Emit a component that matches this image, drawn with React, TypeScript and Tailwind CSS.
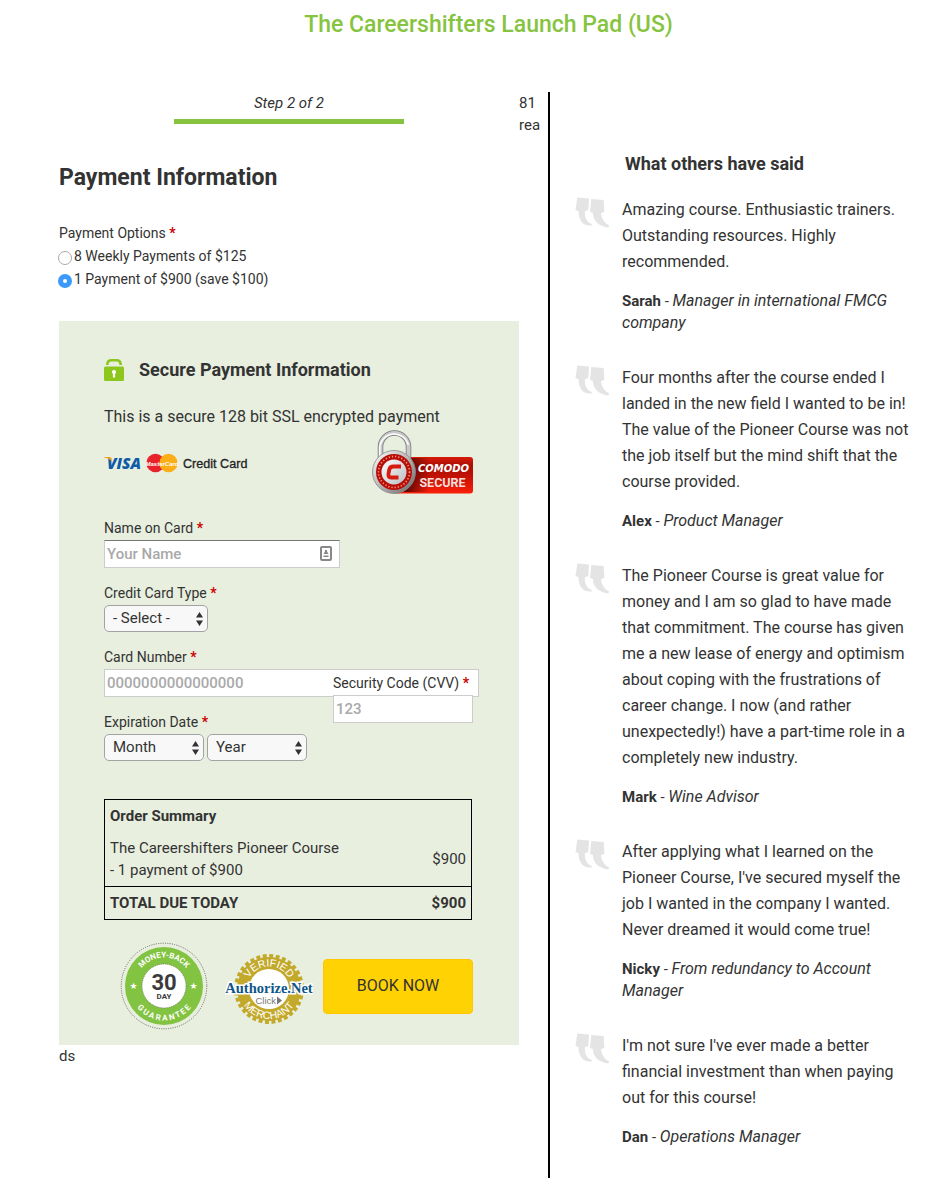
import React from "react";

const quotes = [
  { text: "Amazing course. Enthusiastic trainers. Outstanding resources. Highly recommended.", name: "Sarah", role: "Manager in international FMCG company" },
  { text: "Four months after the course ended I landed in the new field I wanted to be in! The value of the Pioneer Course was not the job itself but the mind shift that the course provided.", name: "Alex", role: "Product Manager" },
  { text: "The Pioneer Course is great value for money and I am so glad to have made that commitment. The course has given me a new lease of energy and optimism about coping with the frustrations of career change. I now (and rather unexpectedly!) have a part-time role in a completely new industry.", name: "Mark", role: "Wine Advisor" },
  { text: "After applying what I learned on the Pioneer Course, I've secured myself the job I wanted in the company I wanted. Never dreamed it would come true!", name: "Nicky", role: "From redundancy to Account Manager" },
  { text: "I'm not sure I've ever made a better financial investment than when paying out for this course!", name: "Dan", role: "Operations Manager" },
];

function Star() {
  return <span className="font-bold text-[#c00]">*</span>;
}

function QuoteMark() {
  return (
    <svg width="34" height="32" viewBox="0 0 34 32" fill="#e4e4e4" className="shrink-0" aria-hidden="true">
      <path d="M2.300 .5 14 1.500 13.300 13.200 10 14C9.300 19.500 11.500 25.500 17 27.200L16.500 28.500C8 29.500 3.300 23 3.500 14L.5 13Z" />
      <path d="M16.300 2 28.700 3 29.300 15 26 16C26.500 21 28.500 25.500 34 28.300L33.500 30.500C24 29.500 17.500 23.500 18 16L15 15Z" />
    </svg>
  );
}

function LockIcon() {
  return (
    <svg width="20" height="22" viewBox="0 0 20 22" aria-hidden="true">
      <path d="M3.300 6C3.300 2.500 5 1.200 7.500 1.200h5C15 1.200 16.700 2.500 16.700 6" fill="none" stroke="#8dc71e" strokeWidth="2.600" />
      <rect y="7.500" width="20" height="14.500" rx="1.500" fill="#8dc71e" />
      <path d="M10 11a2 2 0 0 1 1.100 3.700V18.500H8.900V14.700A2 2 0 0 1 10 11Z" fill="#fff" />
    </svg>
  );
}

function CardLogos() {
  return (
    <svg width="148" height="20" viewBox="0 0 148 20" role="img" aria-label="Visa, MasterCard, Credit Card">
      <text x="3" y="15.500" fontFamily="Open Sans" fontWeight="800" fontStyle="italic" fontSize="15.500" fill="#0f5ba7">VISA</text>
      <path d="M0 4h5.500c1 0 1.500.5 1.700 1.400L8 9C6 6 3.500 5 0 4.500Z" fill="#f4a11d" />
      <circle cx="51.500" cy="10" r="9.200" fill="#e8222b" />
      <circle cx="64.500" cy="10" r="9.200" fill="#fbae17" />
      <text x="58" y="12.500" textAnchor="middle" fontFamily="Liberation Sans" fontWeight="700" fontStyle="italic" fontSize="6" fill="#fff">MasterCard</text>
      <text x="79" y="14.500" fontFamily="Liberation Sans" fontSize="12.600" fill="#222" stroke="#222" strokeWidth=".3">Credit Card</text>
    </svg>
  );
}

function ComodoSeal() {
  return (
    <svg width="102" height="65" viewBox="0 0 102 65" role="img" aria-label="Comodo Secure">
      <defs>
        <linearGradient id="red" x1="0" y1="0" x2="0" y2="1">
          <stop offset="0" stopColor="#d81a08" /><stop offset=".25" stopColor="#a80f05" /><stop offset=".55" stopColor="#c41205" /><stop offset="1" stopColor="#fb1f08" />
        </linearGradient>
        <linearGradient id="shade"><stop offset="0" stopColor="#300" stopOpacity=".85" /><stop offset="1" stopColor="#300" stopOpacity="0" /></linearGradient>
        <linearGradient id="steel" x1="0" y1="0" x2="1" y2="1">
          <stop offset="0" stopColor="#fff" /><stop offset=".5" stopColor="#b5b5b5" /><stop offset="1" stopColor="#666" />
        </linearGradient>
        <linearGradient id="disc" x1="0" y1="0" x2="1" y2="1"><stop offset="0" stopColor="#fff" /><stop offset="1" stopColor="#b8bcc2" /></linearGradient>
      </defs>
      <rect x="22" y="27" width="79" height="36.500" rx="3" fill="url(#red)" />
      <rect x="32" y="28" width="25" height="34" fill="url(#shade)" />
      <path d="M8.500 34V17a14 14 0 0 1 28 0V34" fill="none" stroke="#777" strokeWidth="5.500" />
      <path d="M8.500 34V17a14 14 0 0 1 28 0V34" fill="none" stroke="#c9c9c9" strokeWidth="4" />
      <path d="M7.800 34V17a14.500 14.500 0 0 1 28.500 -2" fill="none" stroke="#fff" strokeWidth="1.500" />
      <circle cx="22" cy="42" r="21.500" fill="url(#steel)" stroke="#888" strokeWidth=".8" />
      <circle cx="22" cy="42" r="18" fill="#b70f08" />
      <circle cx="22" cy="42" r="15.500" fill="none" stroke="#ff9a85" strokeWidth="1.600" strokeDasharray="1.200 2" />
      <circle cx="22" cy="42" r="12.500" fill="url(#disc)" />
      <path d="M29 36.500H21.500Q18 36.500 17.300 39.500L16.500 44Q16 47.500 19 47.500H26.500" fill="none" stroke="#d91a10" strokeWidth="3.800" />
      <text x="71.500" y="42" textAnchor="middle" fontFamily="DejaVu Sans" fontWeight="700" fontStyle="italic" fontSize="10" fill="#fff">COMODO</text>
      <text x="70.500" y="56.500" textAnchor="middle" fontFamily="Roboto" fontWeight="700" fontSize="12.500" fill="#f6dedb">SECURE</text>
    </svg>
  );
}

function GuaranteeSeal() {
  return (
    <svg width="88" height="88" viewBox="0 0 88 88" role="img" aria-label="30 day money-back guarantee">
      <defs>
        <path id="gTop" d="M15.500 44a28.500 28.500 0 0 1 57 0" />
        <path id="gBottom" d="M9.500 44a34.500 34.500 0 0 0 69 0" />
      </defs>
      <circle cx="44" cy="44" r="42.800" fill="none" stroke="#666" strokeWidth="1" strokeDasharray="1 1.300" />
      <circle cx="44" cy="44" r="39" fill="#82c341" />
      <circle cx="44" cy="44" r="22" fill="#fff" stroke="#777" strokeWidth=".8" strokeDasharray="1 1" />
      <g fontFamily="Roboto" fontWeight="700" fontSize="8" fill="#fff" textAnchor="middle">
        <text><textPath href="#gTop" startOffset="50%">MONEY-BACK</textPath></text>
        <text><textPath href="#gBottom" startOffset="50%">G U A R A N T E E</textPath></text>
        <text x="13.500" y="47" fontFamily="DejaVu Sans" fontSize="9">★</text>
        <text x="73.500" y="47" fontFamily="DejaVu Sans" fontSize="9">★</text>
      </g>
      <g fontFamily="Roboto" fontWeight="700" fill="#3b3b3d" textAnchor="middle">
        <text x="44" y="48" fontSize="22">30</text>
        <text x="44" y="57" fontSize="8">DAY</text>
      </g>
    </svg>
  );
}

function AuthorizeSeal() {
  return (
    <svg width="88" height="70" viewBox="0 0 88 70" role="img" aria-label="Authorize.Net verified merchant">
      <defs>
        <path id="aTop" d="M21.500 35a22.500 22.500 0 0 1 45 0" />
        <path id="aBottom" d="M14 35a30 30 0 0 0 60 0" />
      </defs>
      <circle cx="44" cy="35" r="33" fill="none" stroke="#c3a92b" strokeWidth="4" strokeDasharray="3.900 2.580" />
      <circle cx="44" cy="35" r="32" fill="#c3a92b" />
      <circle cx="44" cy="35" r="20" fill="#fff" />
      <g fontFamily="Liberation Sans" fontSize="10.500" fill="#fff" textAnchor="middle">
        <text><textPath href="#aTop" startOffset="50%">VERIFIED</textPath></text>
        <text><textPath href="#aBottom" startOffset="50%">MERCHANT</textPath></text>
      </g>
      <text x="44" y="38.500" textAnchor="middle" fontFamily="Liberation Serif" fontWeight="700" fontSize="14.500" fill="#0e5688" stroke="#fff" strokeWidth="3" paintOrder="stroke">Authorize.Net</text>
      <text x="30.500" y="50" fontFamily="Liberation Sans" fontSize="9.500" fill="#777">Click</text>
      <path d="M52 42.500l5 4-5 4Z" fill="#777" />
    </svg>
  );
}

function Dropdown({ id, label, className }: { id: string; label: string; className: string }) {
  return (
    <span className={"relative block " + className}>
      <select id={id} aria-label={label} className="block h-[27px] w-full appearance-none rounded-[5px] border border-[#a3a3a3] bg-[#f8f8f8] pl-2 text-[15px] text-[#333]">
        <option>{label}</option>
      </select>
      <svg width="7" height="14" viewBox="0 0 7 14" fill="#333" className="pointer-events-none absolute top-[7px] right-[5px]" aria-hidden="true">
        <path d="M3.500 0 7 5.500H0ZM3.500 14 0 8.500H7Z" />
      </svg>
    </span>
  );
}

const labelClass = "block text-[14px] leading-[23px]";
const fieldClass = "block h-7 w-full border border-[#ccc] bg-white px-[2px] text-[15px] text-[#333] placeholder:font-medium placeholder:text-[#a9a9a9]";
const radioClass = "-ml-px mt-[6px] size-[14px] appearance-none rounded-full border border-[#aaa] bg-white checked:border-[5px] checked:border-[#3b99fc]";

export default function App() {
  return (
    <div className="bg-white pb-2 font-[Roboto,sans-serif] text-[#333]">
      <header className="pt-2 pl-[34px] text-center">
        <h1 className="text-[23px] leading-[34px] font-medium text-[#86c440]">The Careershifters Launch Pad (US)</h1>
      </header>

      <div className="mt-[50px] grid grid-cols-[minmax(0,489fr)_minmax(0,395fr)] pl-[59px]">
        <main>
          <div className="flex">
            <form className="min-w-0 flex-1" onSubmit={(e) => e.preventDefault()}>
              <p className="text-center text-[15px] leading-[22px] italic">Step 2 of 2</p>
              <div className="mx-auto mt-[5px] h-[5px] w-1/2 bg-[#86c440]" />
              <h2 className="mt-[38px] text-[23px] leading-8 font-bold">Payment Information</h2>

              <fieldset className="mt-7 text-[14px] leading-[23px]">
                <legend>Payment Options <Star /></legend>
                <label className="flex gap-[2px]"><input type="radio" name="plan" className={radioClass} />8 Weekly Payments of $125</label>
                <label className="flex gap-[2px]"><input type="radio" name="plan" defaultChecked className={radioClass} />1 Payment of $900 (save $100)</label>
              </fieldset>

              <section className="mt-[30px] bg-[#e8efdf] px-[45px] pt-[35px] pb-[15px]">
                <h3 className="flex items-center gap-[15px] text-[18px] leading-7 font-bold"><LockIcon />Secure Payment Information</h3>
                <p className="mt-5 text-base leading-[26px]">This is a secure 128 bit SSL encrypted payment</p>
                <div className="flex items-center justify-between"><CardLogos /><ComodoSeal /></div>

                <label htmlFor="holder" className={labelClass + " mt-[22px]"}>Name on Card <Star /></label>
                <div className="relative w-[236px]">
                  <input id="holder" placeholder="Your Name" className={fieldClass + " border-t-[#767676]"} />
                  <svg width="12" height="15" viewBox="0 0 12 15" className="absolute top-[6px] right-2" aria-hidden="true">
                    <rect x="1" y="1" width="10" height="13" rx="1" fill="#fff" stroke="#888" strokeWidth="2" />
                    <path d="M5 4h2v1.500L8.500 8h-5L5 5.500ZM3.500 9.500h5V11h-5Z" fill="#888" />
                  </svg>
                </div>

                <label htmlFor="type" className={labelClass + " mt-[14px]"}>Credit Card Type <Star /></label>
                <Dropdown id="type" label="- Select -" className="w-[104px]" />

                <div className="relative mt-[14px]">
                  <label htmlFor="number" className={labelClass}>Card Number <Star /></label>
                  <div className="-mr-[5px]"><input id="number" placeholder="0000000000000000" className={fieldClass} /></div>
                  <div className="absolute top-[26px] right-px w-[140px]">
                    <label htmlFor="cvv" className={labelClass + " whitespace-nowrap"}>Security Code (CVV) <Star /></label>
                    <input id="cvv" placeholder="123" className={fieldClass} />
                  </div>
                </div>

                <label htmlFor="month" className={labelClass + " mt-[14px]"}>Expiration Date <Star /></label>
                <div className="flex gap-[3px]">
                  <Dropdown id="month" label="Month" className="w-[100px]" />
                  <Dropdown id="year" label="Year" className="w-[100px]" />
                </div>

                <div className="mt-[38px] pr-[2px]">
                  <table className="w-full border border-black text-[15px] leading-[22px]">
                    <thead>
                      <tr><th colSpan={2} className="px-[5px] py-[5px] text-left">Order Summary</th></tr>
                    </thead>
                    <tbody>
                      <tr className="border-b border-black">
                        <td className="px-[5px] py-[5px]">The Careershifters Pioneer Course<br />- 1 payment of $900</td>
                        <td className="px-[5px] text-right">$900</td>
                      </tr>
                      <tr className="font-bold">
                        <td className="px-[5px] py-[5px]">TOTAL DUE TODAY</td>
                        <td className="px-[5px] text-right">$900</td>
                      </tr>
                    </tbody>
                  </table>
                </div>

                <div className="mt-[22px] flex items-center pr-px pl-4">
                  <GuaranteeSeal />
                  <a href="#verify" className="mt-[6px] ml-[17px]"><AuthorizeSeal /></a>
                  <button className="ml-auto h-[55px] w-[150px] rounded-[4px] border border-[#ffc600] bg-[#ffd204] text-base">BOOK NOW</button>
                </div>
              </section>
            </form>
            <p className="w-[29px] text-[15px] leading-[22px]">81<br />rea</p>
          </div>
          <p className="text-[15px] leading-[22px]">ds</p>
        </main>

        <aside className="border-l-2 border-black pt-[58px] pr-[25px] pb-[30px] pl-[25px]">
          <h2 className="pl-[50px] text-[18px] leading-7 font-bold">What others have said</h2>
          <div className="mt-[19px] flex flex-col gap-[31px]">
            {quotes.map((q) => (
              <figure key={q.name} className="flex gap-[13px]">
                <QuoteMark />
                <div>
                  <blockquote className="text-base leading-[26px]">{q.text}</blockquote>
                  <figcaption className="mt-[15px] text-[15px] leading-[22px]"><b>{q.name}</b> - <i className="text-base leading-[22px]">{q.role}</i></figcaption>
                </div>
              </figure>
            ))}
          </div>
        </aside>
      </div>
    </div>
  );
}
